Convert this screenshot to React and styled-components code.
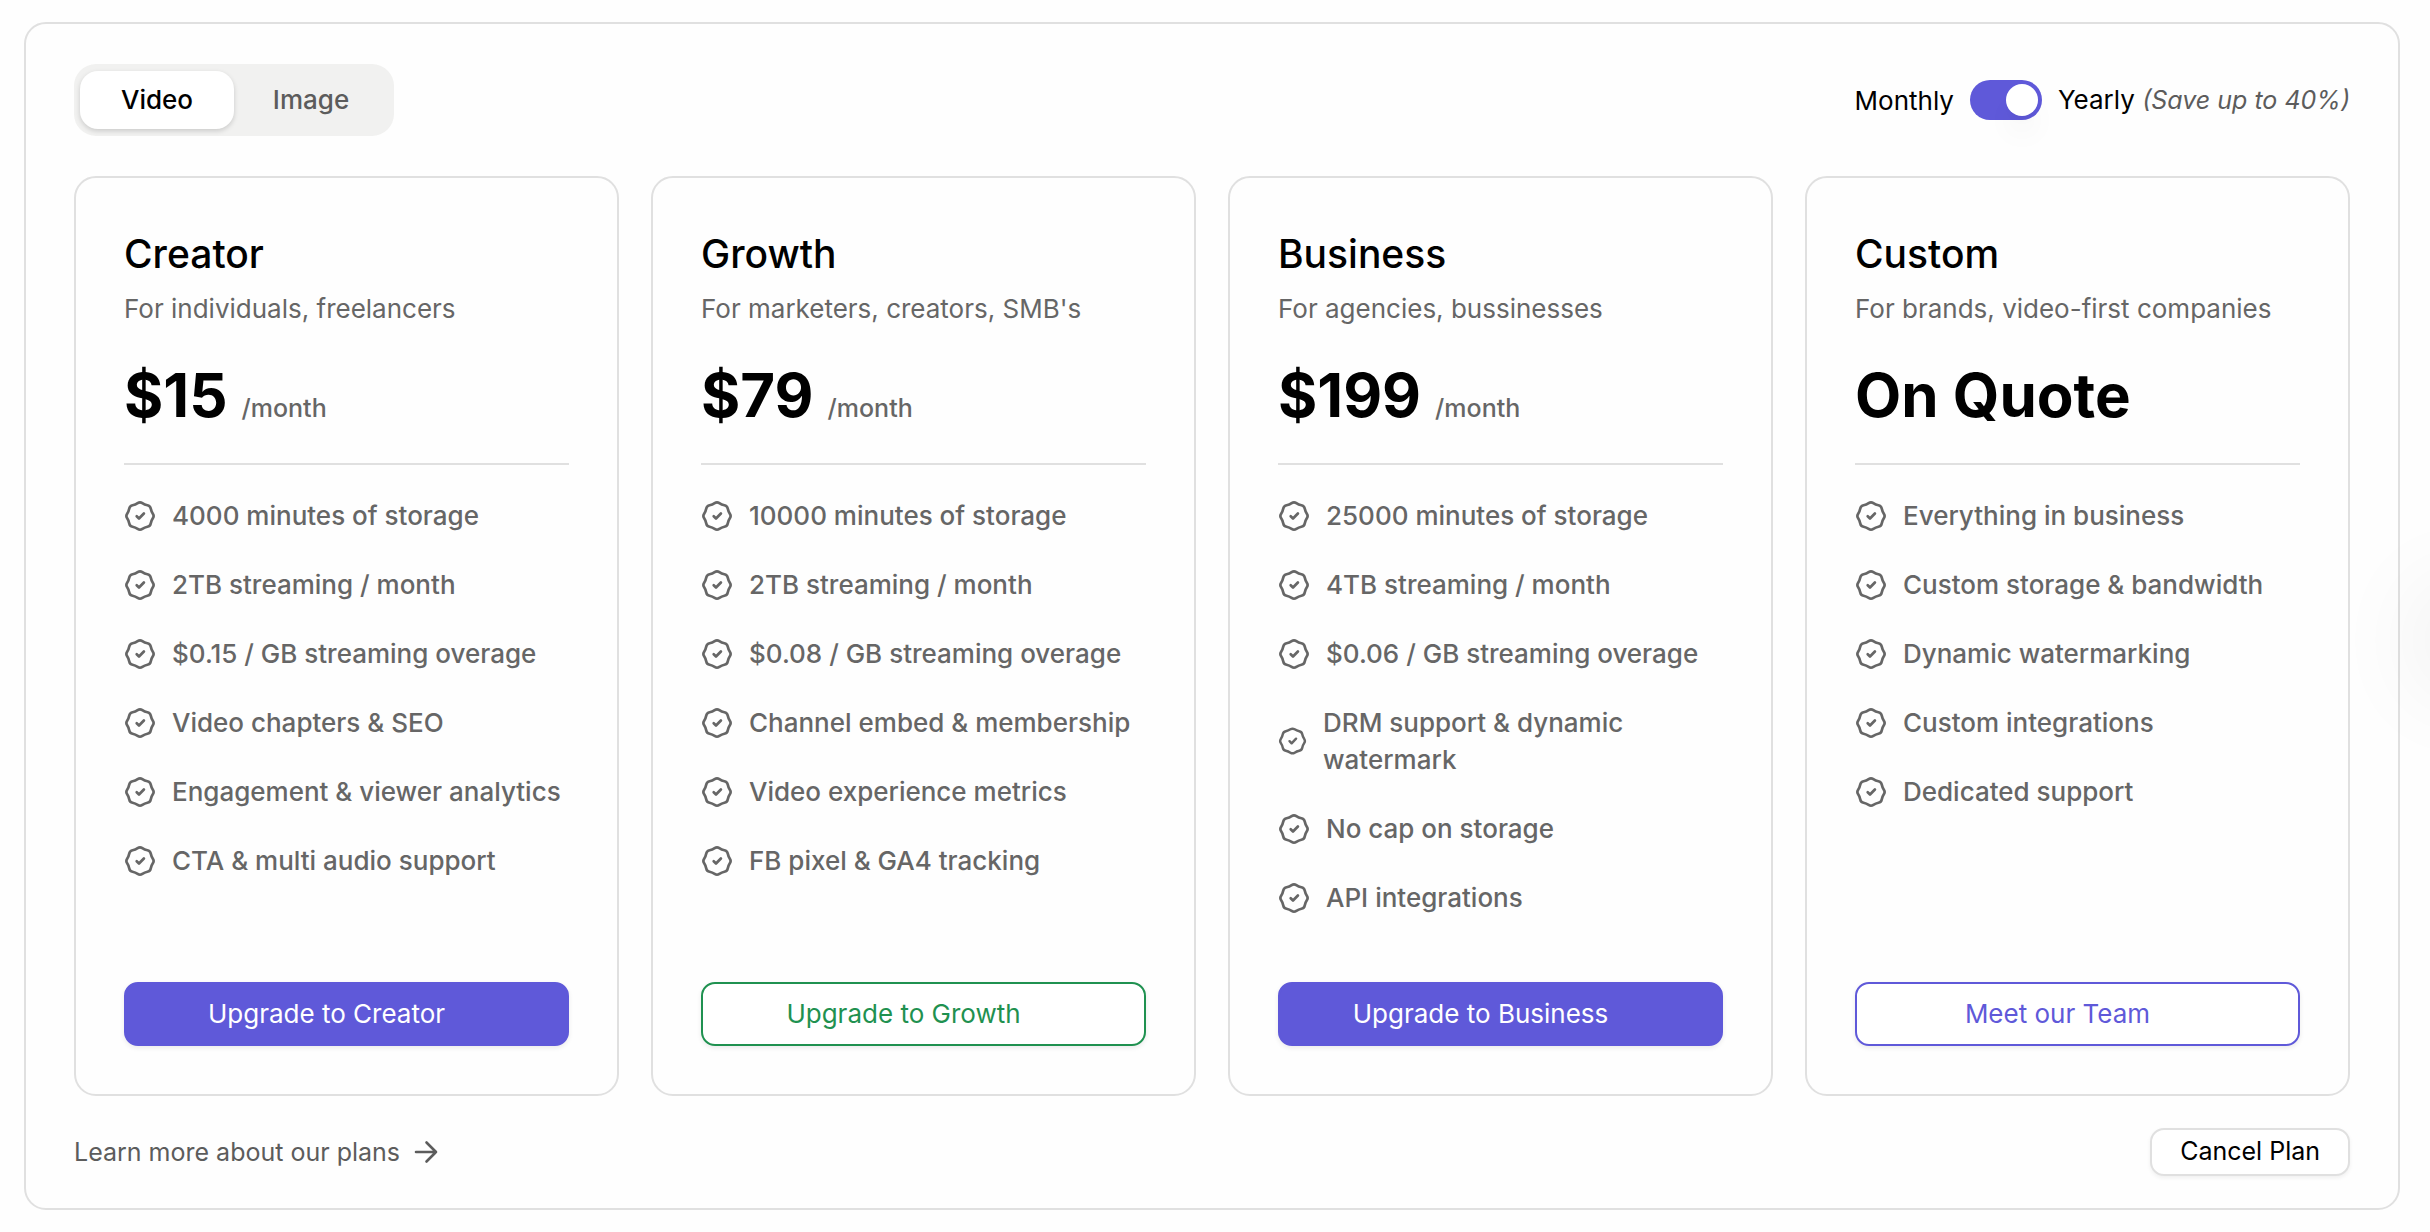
import React, { useState } from "react";
import styled, { createGlobalStyle } from "styled-components";

const plans = [
  {
    name: "Creator",
    desc: "For individuals, freelancers",
    price: "$15",
    cta: "Upgrade to Creator",
    variant: "solid",
    features: [
      "4000 minutes of storage",
      "2TB streaming / month",
      "$0.15 / GB streaming overage",
      "Video chapters & SEO",
      "Engagement & viewer analytics",
      "CTA & multi audio support",
    ],
  },
  {
    name: "Growth",
    desc: "For marketers, creators, SMB's",
    price: "$79",
    cta: "Upgrade to Growth",
    variant: "green",
    features: [
      "10000 minutes of storage",
      "2TB streaming / month",
      "$0.08 / GB streaming overage",
      "Channel embed & membership",
      "Video experience metrics",
      "FB pixel & GA4 tracking",
    ],
  },
  {
    name: "Business",
    desc: "For agencies, bussinesses",
    price: "$199",
    cta: "Upgrade to Business",
    variant: "solid",
    features: [
      "25000 minutes of storage",
      "4TB streaming / month",
      "$0.06 / GB streaming overage",
      "DRM support & dynamic watermark",
      "No cap on storage",
      "API integrations",
    ],
  },
  {
    name: "Custom",
    desc: "For brands, video-first companies",
    price: "On Quote",
    custom: true,
    cta: "Meet our Team",
    variant: "outline",
    features: [
      "Everything in business",
      "Custom storage & bandwidth",
      "Dynamic watermarking",
      "Custom integrations",
      "Dedicated support",
    ],
  },
];

// scalloped badge outline: eight soft bumps round a 32px box
const badgePath = () => {
  const points = Array.from({ length: 16 }, (_, i) => {
    const angle = (i * Math.PI) / 8;
    const r = i % 2 ? 12.2 : 14.4;
    return [16 + r * Math.sin(angle), 16 - r * Math.cos(angle)];
  });
  const mid = (a, b) => `${((a[0] + b[0]) / 2).toFixed(2)} ${((a[1] + b[1]) / 2).toFixed(2)}`;
  const curves = points.map((p, i) => `Q${p[0].toFixed(2)} ${p[1].toFixed(2)} ${mid(p, points[(i + 1) % 16])}`);
  return `M${mid(points[15], points[0])}${curves.join("")}Z`;
};

const outline = badgePath();

const BadgeIcon = () => (
  <svg viewBox="0 0 32 32" fill="none" stroke="currentColor" strokeWidth="2.7" strokeLinecap="round" strokeLinejoin="round" aria-hidden="true">
    <path d={outline} />
    <path d="m12.7 16.2 2.3 2.3 4.9-5" />
  </svg>
);

const ArrowIcon = () => (
  <svg width="24" height="26" viewBox="0 0 24 26" fill="none" stroke="currentColor" strokeWidth="2.6" strokeLinecap="round" strokeLinejoin="round" aria-hidden="true">
    <path d="M2 13h20M12.5 3.500l9.500 9.500-9.500 9.500" />
  </svg>
);

function App() {
  const [tab, setTab] = useState("Video");
  const [yearly, setYearly] = useState(true);

  return (
    <>
      <GlobalStyle />
      <Page>
        <TopBar>
          <Tabs role="tablist">
            {["Video", "Image"].map((item) => (
              <Tab key={item} type="button" role="tab" aria-selected={tab === item} $active={tab === item} onClick={() => setTab(item)}>
                {item}
              </Tab>
            ))}
          </Tabs>
          <Billing>
            <span>Monthly</span>
            <Switch id="billing" type="checkbox" role="switch" checked={yearly} onChange={(e) => setYearly(e.target.checked)} />
            <label htmlFor="billing">
              Yearly <em>(Save up to 40%)</em>
            </label>
          </Billing>
        </TopBar>

        <Grid>
          {plans.map((plan) => (
            <Card key={plan.name}>
              <PlanName>{plan.name}</PlanName>
              <PlanDesc>{plan.desc}</PlanDesc>
              <Price>
                {plan.price}
                {!plan.custom && <Period>/month</Period>}
              </Price>
              <Features>
                {plan.features.map((feature) => (
                  <Feature key={feature}>
                    <BadgeIcon />
                    <span>{feature}</span>
                  </Feature>
                ))}
              </Features>
              <PlanButton type="button" $variant={plan.variant}>
                {plan.cta}
              </PlanButton>
            </Card>
          ))}
        </Grid>

        <Footer>
          <LearnMore href="#plans">
            Learn more about our plans
            <ArrowIcon />
          </LearnMore>
          <CancelButton type="button">Cancel Plan</CancelButton>
        </Footer>
      </Page>
      <EdgeGlow />
    </>
  );
}

const GlobalStyle = createGlobalStyle`
  * {
    box-sizing: border-box;
    margin: 0;
  }

  body {
    margin: 0;
    background: #fefefe;
    color: #000;
    font-family: Inter, "Liberation Sans", sans-serif;
    font-size: 26px;
    line-height: 37px;
    overflow-x: hidden;
  }

  button {
    font: inherit;
    cursor: pointer;
  }
`;

const Page = styled.main`
  margin: 22px 30px 22px 24px;
  padding: 40px 48px 32px;
  border: 2px solid #e0e0e0;
  border-radius: 22px;
`;

const TopBar = styled.header`
  display: flex;
  align-items: center;
  justify-content: space-between;
`;

const Tabs = styled.div`
  display: flex;
  padding: 7px 6px;
  border-radius: 22px;
  background: #f1f1f0;
`;

const Tab = styled.button`
  width: 154px;
  height: 58px;
  padding: 0 0 2px;
  border: none;
  border-radius: 18px;
  font-weight: 500;
  color: ${({ $active }) => ($active ? "#000" : "#5c5c5c")};
  background: ${({ $active }) => ($active ? "#fff" : "transparent")};
  box-shadow: ${({ $active }) => ($active ? "0 2px 5px rgba(0, 0, 0, 0.16)" : "none")};
`;

const Billing = styled.div`
  display: flex;
  align-items: center;
  gap: 16px;

  em {
    font-size: 25px;
    color: #5c5c5c;
  }
`;

const Switch = styled.input`
  appearance: none;
  display: flex;
  align-items: center;
  width: 72px;
  height: 40px;
  padding: 0 4px;
  border-radius: 20px;
  background: ${({ checked }) => (checked ? "#5f59d9" : "#d4d4d4")};
  justify-content: ${({ checked }) => (checked ? "flex-end" : "flex-start")};
  cursor: pointer;

  &::before {
    content: "";
    width: 32px;
    height: 32px;
    border-radius: 50%;
    background: #fff;
    box-shadow: 0 20px 30px -6px rgba(0, 0, 0, 0.08), 0 8px 12px -8px rgba(0, 0, 0, 0.08);
  }
`;

const Grid = styled.section`
  display: grid;
  grid-template-columns: repeat(4, 1fr);
  gap: 32px;
  margin: 40px 0 32px;
`;

const Card = styled.article`
  display: flex;
  flex-direction: column;
  padding: 48px;
  border: 2px solid #e0e0e0;
  border-radius: 22px;
`;

const PlanName = styled.h2`
  font-size: 39px;
  font-weight: 500;
  line-height: 56px;
`;

const PlanDesc = styled.p`
  margin-top: 8px;
  color: #666;
`;

const Price = styled.div`
  display: flex;
  align-items: baseline;
  gap: 14px;
  margin-top: 32px;
  padding-bottom: 32px;
  border-bottom: 2px solid #e0e0e0;
  font-size: 60px;
  font-weight: 700;
  line-height: 72px;
`;

const Period = styled.span`
  font-size: 25px;
  font-weight: 500;
  line-height: 37px;
  color: #666;
`;

const Features = styled.ul`
  display: flex;
  flex-direction: column;
  gap: 32px;
  margin: 32px 0 66px;
  padding: 0;
  list-style: none;
`;

const Feature = styled.li`
  display: flex;
  align-items: center;
  gap: 16px;
  color: #666;
  font-weight: 500;

  svg {
    width: 32px;
    height: 32px;
    min-width: 0;
  }
`;

const variants = {
  solid: { text: "#fff", bg: "#5f59d9", border: "#5f59d9" },
  green: { text: "#1f9150", bg: "#fff", border: "#1f9150" },
  outline: { text: "#5f59d9", bg: "#fff", border: "#5f59d9" },
};

const PlanButton = styled.button`
  height: 64px;
  margin-top: auto;
  padding: 0 56px 2px 16px;
  border: 2px solid ${({ $variant }) => variants[$variant].border};
  border-radius: 14px;
  background: ${({ $variant }) => variants[$variant].bg};
  color: ${({ $variant }) => variants[$variant].text};
  box-shadow: 0 2px 5px rgba(0, 0, 0, 0.08);
`;

const Footer = styled.footer`
  display: flex;
  align-items: center;
  justify-content: space-between;
`;

const LearnMore = styled.a`
  display: inline-flex;
  align-items: center;
  gap: 14px;
  font-size: 25px;
  color: #5c5c5c;
  text-decoration: none;
`;

const CancelButton = styled.button`
  height: 48px;
  padding: 0 28px 2px;
  border: 2px solid #e0e0e0;
  border-radius: 14px;
  background: #fff;
  font-size: 25px;
  box-shadow: 0 2px 4px rgba(0, 0, 0, 0.06);
`;

const EdgeGlow = styled.div`
  position: fixed;
  top: 600px;
  right: -80px;
  width: 80px;
  height: 80px;
  border-radius: 40px;
  box-shadow: 0 0 100px 10px rgba(0, 0, 0, 0.08);
  pointer-events: none;
`;

export default App;
